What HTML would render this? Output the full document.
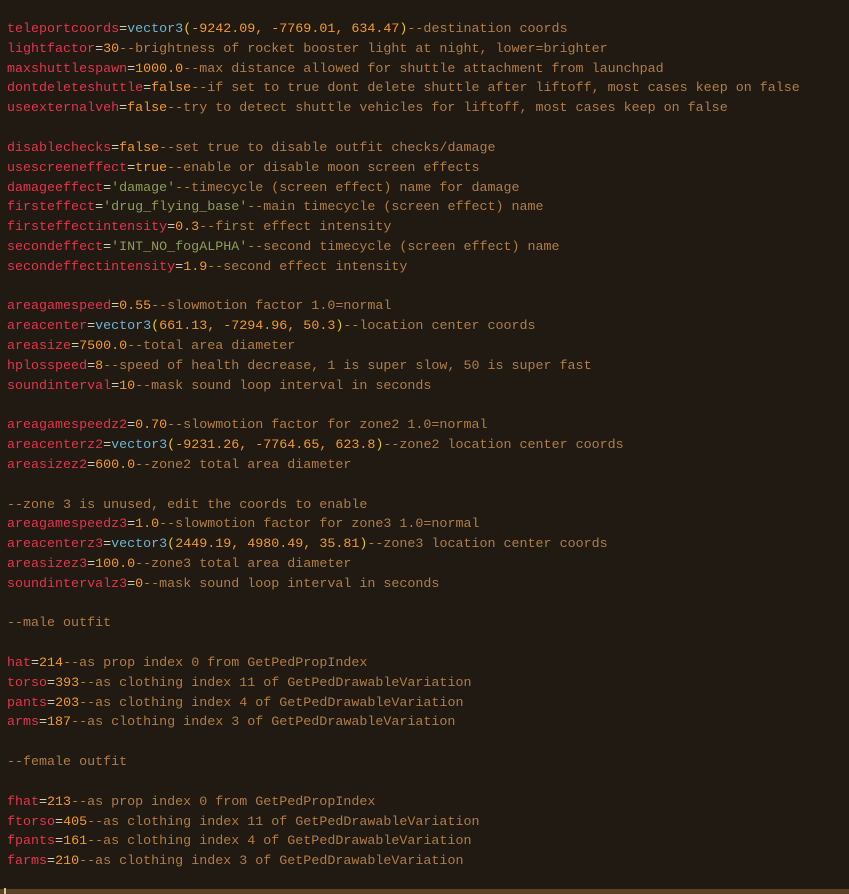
<!DOCTYPE html>
<html><head><meta charset="utf-8"><style>
html,body{margin:0;padding:0;background:#211a12;width:849px;height:894px;overflow:hidden}
pre{margin:0;position:absolute;left:7px;top:20px;font-family:"Liberation Mono",monospace;font-size:13.35px;line-height:19.82px;color:#b27c45;white-space:pre}
.k{color:#e5344e}.e{color:#d8d0c0}.n{color:#f39a2a}.v{color:#6fb4cf}.p{color:#e6c81e}.s{color:#8e9e58}
.bar{position:absolute;left:0;top:889px;width:849px;height:5px;background:#5a4228}
.cur{position:absolute;left:4px;top:888px;width:2px;height:6px;background:#e8c090}
</style></head><body>
<pre><span class="k">teleportcoords</span><span class="e">=</span><span class="v">vector3</span><span class="p">(</span><span class="n">-9242.09, -7769.01, 634.47</span><span class="p">)</span>--destination coords
<span class="k">lightfactor</span><span class="e">=</span><span class="n">30</span>--brightness of rocket booster light at night, lower=brighter
<span class="k">maxshuttlespawn</span><span class="e">=</span><span class="n">1000.0</span>--max distance allowed for shuttle attachment from launchpad
<span class="k">dontdeleteshuttle</span><span class="e">=</span><span class="n">false</span>--if set to true dont delete shuttle after liftoff, most cases keep on false
<span class="k">useexternalveh</span><span class="e">=</span><span class="n">false</span>--try to detect shuttle vehicles for liftoff, most cases keep on false

<span class="k">disablechecks</span><span class="e">=</span><span class="n">false</span>--set true to disable outfit checks/damage
<span class="k">usescreeneffect</span><span class="e">=</span><span class="n">true</span>--enable or disable moon screen effects
<span class="k">damageeffect</span><span class="e">=</span><span class="s">'damage'</span>--timecycle (screen effect) name for damage
<span class="k">firsteffect</span><span class="e">=</span><span class="s">'drug_flying_base'</span>--main timecycle (screen effect) name
<span class="k">firsteffectintensity</span><span class="e">=</span><span class="n">0.3</span>--first effect intensity
<span class="k">secondeffect</span><span class="e">=</span><span class="s">'INT_NO_fogALPHA'</span>--second timecycle (screen effect) name
<span class="k">secondeffectintensity</span><span class="e">=</span><span class="n">1.9</span>--second effect intensity

<span class="k">areagamespeed</span><span class="e">=</span><span class="n">0.55</span>--slowmotion factor 1.0=normal
<span class="k">areacenter</span><span class="e">=</span><span class="v">vector3</span><span class="p">(</span><span class="n">661.13, -7294.96, 50.3</span><span class="p">)</span>--location center coords
<span class="k">areasize</span><span class="e">=</span><span class="n">7500.0</span>--total area diameter
<span class="k">hplosspeed</span><span class="e">=</span><span class="n">8</span>--speed of health decrease, 1 is super slow, 50 is super fast
<span class="k">soundinterval</span><span class="e">=</span><span class="n">10</span>--mask sound loop interval in seconds

<span class="k">areagamespeedz2</span><span class="e">=</span><span class="n">0.70</span>--slowmotion factor for zone2 1.0=normal
<span class="k">areacenterz2</span><span class="e">=</span><span class="v">vector3</span><span class="p">(</span><span class="n">-9231.26, -7764.65, 623.8</span><span class="p">)</span>--zone2 location center coords
<span class="k">areasizez2</span><span class="e">=</span><span class="n">600.0</span>--zone2 total area diameter

--zone 3 is unused, edit the coords to enable
<span class="k">areagamespeedz3</span><span class="e">=</span><span class="n">1.0</span>--slowmotion factor for zone3 1.0=normal
<span class="k">areacenterz3</span><span class="e">=</span><span class="v">vector3</span><span class="p">(</span><span class="n">2449.19, 4980.49, 35.81</span><span class="p">)</span>--zone3 location center coords
<span class="k">areasizez3</span><span class="e">=</span><span class="n">100.0</span>--zone3 total area diameter
<span class="k">soundintervalz3</span><span class="e">=</span><span class="n">0</span>--mask sound loop interval in seconds

--male outfit

<span class="k">hat</span><span class="e">=</span><span class="n">214</span>--as prop index 0 from GetPedPropIndex
<span class="k">torso</span><span class="e">=</span><span class="n">393</span>--as clothing index 11 of GetPedDrawableVariation
<span class="k">pants</span><span class="e">=</span><span class="n">203</span>--as clothing index 4 of GetPedDrawableVariation
<span class="k">arms</span><span class="e">=</span><span class="n">187</span>--as clothing index 3 of GetPedDrawableVariation

--female outfit

<span class="k">fhat</span><span class="e">=</span><span class="n">213</span>--as prop index 0 from GetPedPropIndex
<span class="k">ftorso</span><span class="e">=</span><span class="n">405</span>--as clothing index 11 of GetPedDrawableVariation
<span class="k">fpants</span><span class="e">=</span><span class="n">161</span>--as clothing index 4 of GetPedDrawableVariation
<span class="k">farms</span><span class="e">=</span><span class="n">210</span>--as clothing index 3 of GetPedDrawableVariation</pre>
<div class="bar"></div><div class="cur"></div>
</body></html>
